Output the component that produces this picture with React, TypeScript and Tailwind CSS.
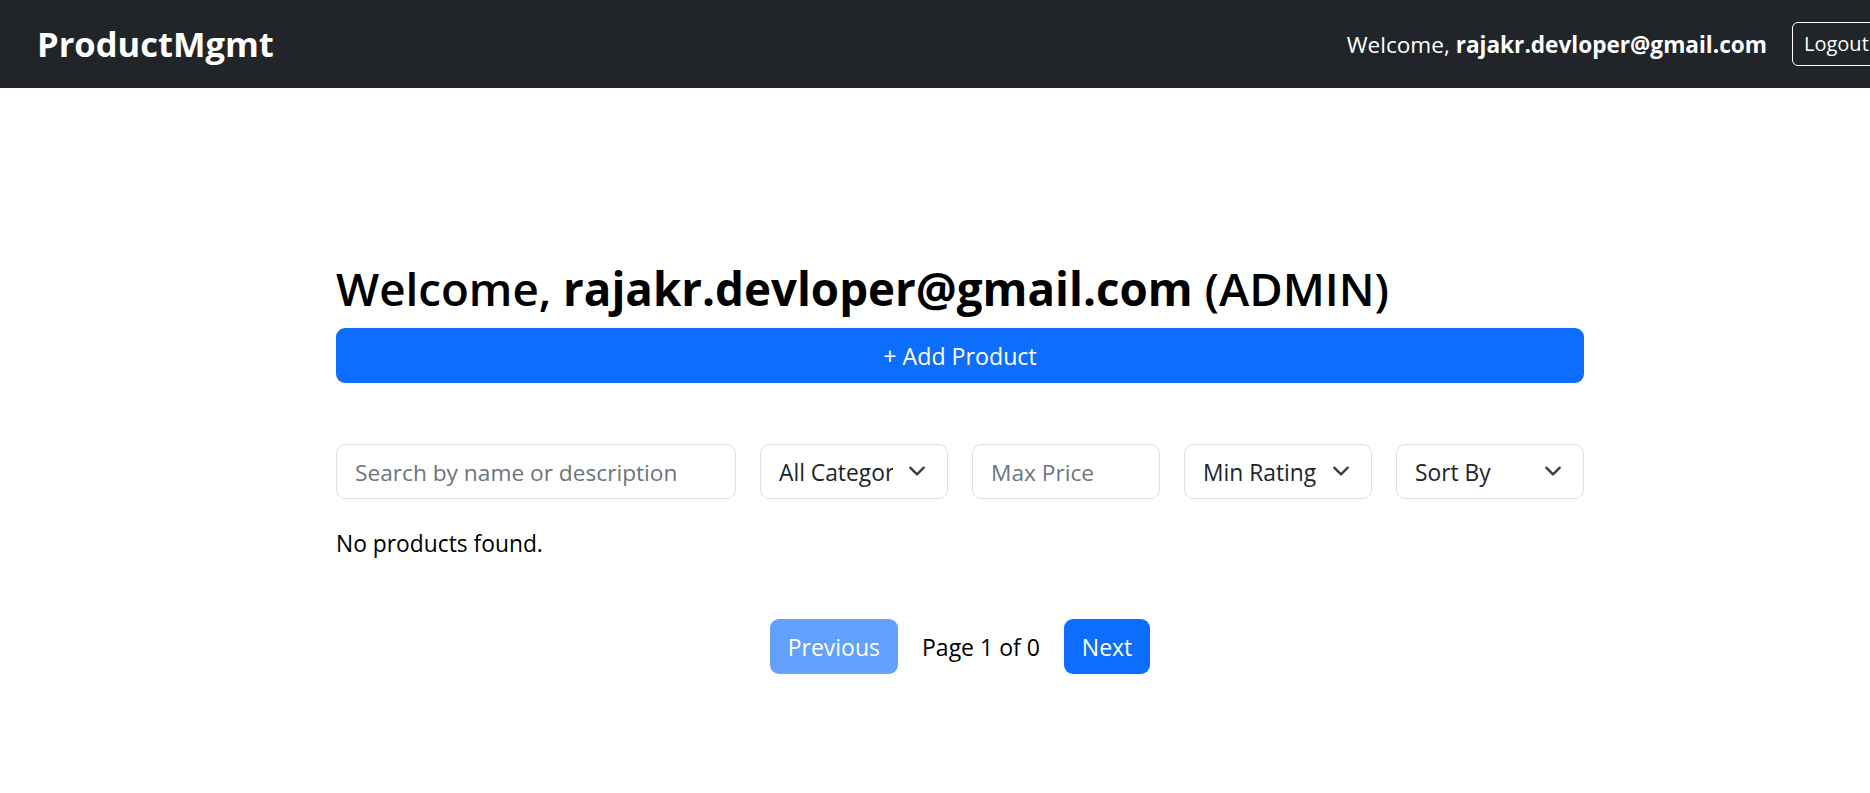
import React from 'react';

const fontStack = "font-['Open_Sans','Noto_Sans',sans-serif]";

function Chevron() {
  return (
    <svg width="18" height="18" viewBox="0 0 16 16" fill="none" className="shrink-0">
      <path d="m2 5 6 6 6-6" stroke="#343a40" strokeWidth="2" strokeLinecap="round" strokeLinejoin="round" />
    </svg>
  );
}

function SelectBox({ label, width }: { label: string; width: string }) {
  return (
    <div className={`relative h-[55px] ${width} border border-[#dee2e6] rounded-[9px] bg-white flex items-center`}>
      <span className="ml-[18px] mr-[54px] pt-[3px] flex-1 min-w-0 overflow-hidden whitespace-nowrap text-[22.8px] text-[#212529]">
        {label}
      </span>
      <span className="absolute right-[21px] top-1/2 -translate-y-1/2 flex">
        <Chevron />
      </span>
    </div>
  );
}

function InputBox({ placeholder, width }: { placeholder: string; width: string }) {
  return (
    <div className={`h-[55px] ${width} border border-[#dee2e6] rounded-[9px] bg-white flex items-center`}>
      <span className="pl-[18px] pt-[3px] whitespace-nowrap overflow-hidden text-[22.7px] text-[#6c757d]">{placeholder}</span>
    </div>
  );
}

export default function App() {
  return (
    <div className={`min-h-screen w-full overflow-x-hidden bg-white text-[#212529] ${fontStack}`}>
      {/* Navbar */}
      <nav className="h-[88px] bg-[#212529] flex items-center pl-[37px] overflow-hidden">
        <span className="text-white font-bold text-[34.5px] leading-none">ProductMgmt</span>
        <div className="ml-auto flex items-center -mr-[12px]">
          <span className="text-white text-[22.6px] pt-[2px]">
            Welcome, <span className="font-bold">rajakr.devloper@gmail.com</span>
          </span>
          <button className="ml-[25px] w-[90px] h-[44px] border border-white rounded-[6px] text-white text-[20px] text-left pl-[11px]">
            Logout
          </button>
        </div>
      </nav>

      <main className="ml-[336px] w-[1248px] pt-[172px] pb-[60px]">
        <h2 className="text-[45.7px] leading-[57.6px] font-semibold text-black">
          Welcome, <span className="font-bold">rajakr.devloper@gmail.com</span> (ADMIN)
        </h2>
        <button className="mt-[10px] w-full h-[55px] pt-[2px] bg-[#0d6efd] rounded-[9px] text-white text-[23.2px]">
          + Add Product
        </button>

        {/* Filters */}
        <div className="mt-[61px] flex gap-[24px]">
          <InputBox placeholder="Search by name or description" width="w-[400px]" />
          <SelectBox label="All Categories" width="w-[188px]" />
          <InputBox placeholder="Max Price" width="w-[188px]" />
          <SelectBox label="Min Rating" width="w-[188px]" />
          <SelectBox label="Sort By" width="w-[188px]" />
        </div>

        <p className="mt-[27px] text-[22.8px] leading-[36px] text-black">No products found.</p>

        {/* Pagination */}
        <div className="mt-[57px] flex items-center justify-center gap-[24px]">
          <button className="h-[55px] px-[18px] pt-[2px] rounded-[9px] bg-[#62a1fe] text-white text-[23px]">Previous</button>
          <span className="pt-[2px] text-[23px] text-black">Page 1 of 0</span>
          <button className="h-[55px] px-[18px] pt-[2px] rounded-[9px] bg-[#0d6efd] text-white text-[23px]">Next</button>
        </div>
      </main>
    </div>
  );
}
